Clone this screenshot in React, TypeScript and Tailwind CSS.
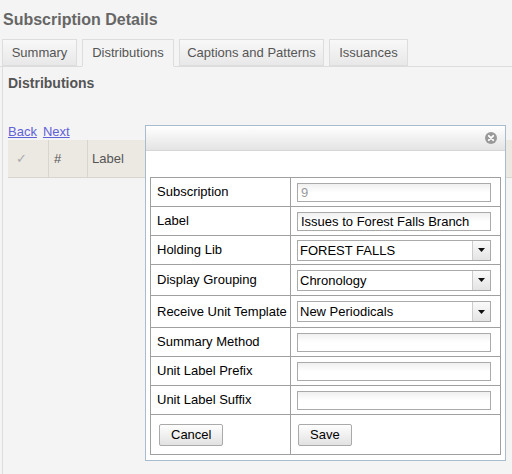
const font = { fontFamily: '"Liberation Sans", Arial, sans-serif' }

const tabs = [
  { name: 'Summary', w: 'w-[75px]' },
  { name: 'Distributions', w: 'w-[92px]' },
  { name: 'Captions and Patterns', w: 'w-[145px]' },
  { name: 'Issuances', w: 'w-[79px]' },
]

function TextInput({ value, muted }: { value?: string; muted?: boolean }) {
  return (
    <div
      className={`h-[19px] w-[194px] border border-[#aaa] bg-gradient-to-b from-[#f0f0f0] via-white to-white px-[3px] text-[13px] leading-[17px] ${
        muted ? 'text-[#999]' : 'text-black'
      }`}
    >
      {value}
    </div>
  )
}

function Select({ value }: { value: string }) {
  return (
    <div className="flex h-[21px] w-[194px] border border-[#aaa] bg-white text-[13px] leading-[19px]">
      <div className="flex-1 px-[2px]">{value}</div>
      <div className="flex w-[18px] items-center justify-center border-l border-[#ccc] bg-gradient-to-b from-[#fafafa] to-[#e4e4e4]">
        <svg width="7" height="4" viewBox="0 0 7 4">
          <path d="M0 0h7L3.5 4z" fill="#111" />
        </svg>
      </div>
    </div>
  )
}

const rows: { label: string; h: string; field: React.ReactNode }[] = [
  { label: 'Subscription', h: 'h-[29px]', field: <TextInput value="9" muted /> },
  { label: 'Label', h: 'h-[29px]', field: <TextInput value="Issues to Forest Falls Branch" /> },
  { label: 'Holding Lib', h: 'h-[29px]', field: <Select value="FOREST FALLS" /> },
  { label: 'Display Grouping', h: 'h-[31px]', field: <Select value="Chronology" /> },
  { label: 'Receive Unit Template', h: 'h-[32px]', field: <Select value="New Periodicals" /> },
  { label: 'Summary Method', h: 'h-[29px]', field: <TextInput /> },
  { label: 'Unit Label Prefix', h: 'h-[29px]', field: <TextInput /> },
  { label: 'Unit Label Suffix', h: 'h-[29px]', field: <TextInput /> },
]

function Button({ children }: { children: React.ReactNode }) {
  return (
    <button className="h-[22px] rounded-[2px] border border-[#aaa] bg-gradient-to-b from-[#fefefe] to-[#e2e2e2] px-[11px] text-[13px] leading-[20px] text-black">
      {children}
    </button>
  )
}

export default function App() {
  return (
    <div className="relative h-[474px] w-[512px] overflow-hidden bg-[#f4f4f4]" style={font}>
      {/* Page title */}
      <h1 className="pl-[3px] pt-[10px] text-[16px] font-bold leading-[20px] text-[#666]">Subscription Details</h1>

      {/* Tabs */}
      <div className="mt-[9px] flex h-[28px] gap-[5px] border-b border-[#ddd] pl-[2px]">
        {tabs.map((t, i) => (
          <div
            key={t.name}
            className={`${t.w} border border-[#ddd] text-center text-[13px] leading-[26px] text-[#555] ${
              i === 1 ? 'mb-[-1px] border-b-[#f4f4f4] bg-[#f4f4f4]' : 'bg-gradient-to-b from-[#f8f8f8] to-[#e8e8e8]'
            }`}
          >
            {t.name}
          </div>
        ))}
      </div>

      {/* Tab pane */}
      <div className="ml-[2px] h-[420px] border-l border-[#ddd] pl-[5px]">
        <h2 className="pt-[8px] text-[14px] font-bold leading-[16px] text-[#555]">Distributions</h2>
        <div className="mt-[33px] flex gap-[6px] text-[13px] leading-[16px] text-[#6161d6] underline">
          <span>Back</span>
          <span>Next</span>
        </div>
        <div className="flex h-[38px] border-b border-[#d8d5ce] bg-[#ece9e3] text-[13px] text-[#555]">
          <div className="flex w-[41px] items-center border-r border-[#d8d5ce] pl-[8px] text-[#aaa]">✓</div>
          <div className="flex w-[39px] items-center border-r border-[#d8d5ce] pl-[5px]">#</div>
          <div className="flex flex-1 items-center pl-[4px]">Label</div>
        </div>
      </div>

      {/* Dialog */}
      <div className="absolute left-[145px] top-[125px] h-[336px] w-[361px] border border-[#a9bccd] bg-white">
        <div className="flex h-[25px] items-center justify-end border-b border-[#d6d6d6] bg-gradient-to-b from-white to-[#e4e4e4] pr-[8px]">
          <svg width="12" height="12" viewBox="0 0 12 12">
            <circle cx="6" cy="6" r="6" fill="#9a9a9a" />
            <path d="M3.8 3.8l4.4 4.4M8.2 3.8l-4.4 4.4" stroke="#fff" strokeWidth="1.8" strokeLinecap="round" />
          </svg>
        </div>
        <div className="px-[4px] pt-[26px]">
          <table className="w-[351px] border-collapse text-[13px] text-black">
            <tbody>
              {rows.map((r) => (
                <tr key={r.label} className={r.h}>
                  <td className="w-[140px] border border-[#a0a0a0] pl-[6px]">{r.label}</td>
                  <td className="border border-[#a0a0a0] pl-[6px]">{r.field}</td>
                </tr>
              ))}
              <tr className="h-[40px]">
                <td className="border border-[#a0a0a0] pl-[8px]">
                  <Button>Cancel</Button>
                </td>
                <td className="border border-[#a0a0a0] pl-[7px]">
                  <Button>Save</Button>
                </td>
              </tr>
            </tbody>
          </table>
        </div>
      </div>
    </div>
  )
}
